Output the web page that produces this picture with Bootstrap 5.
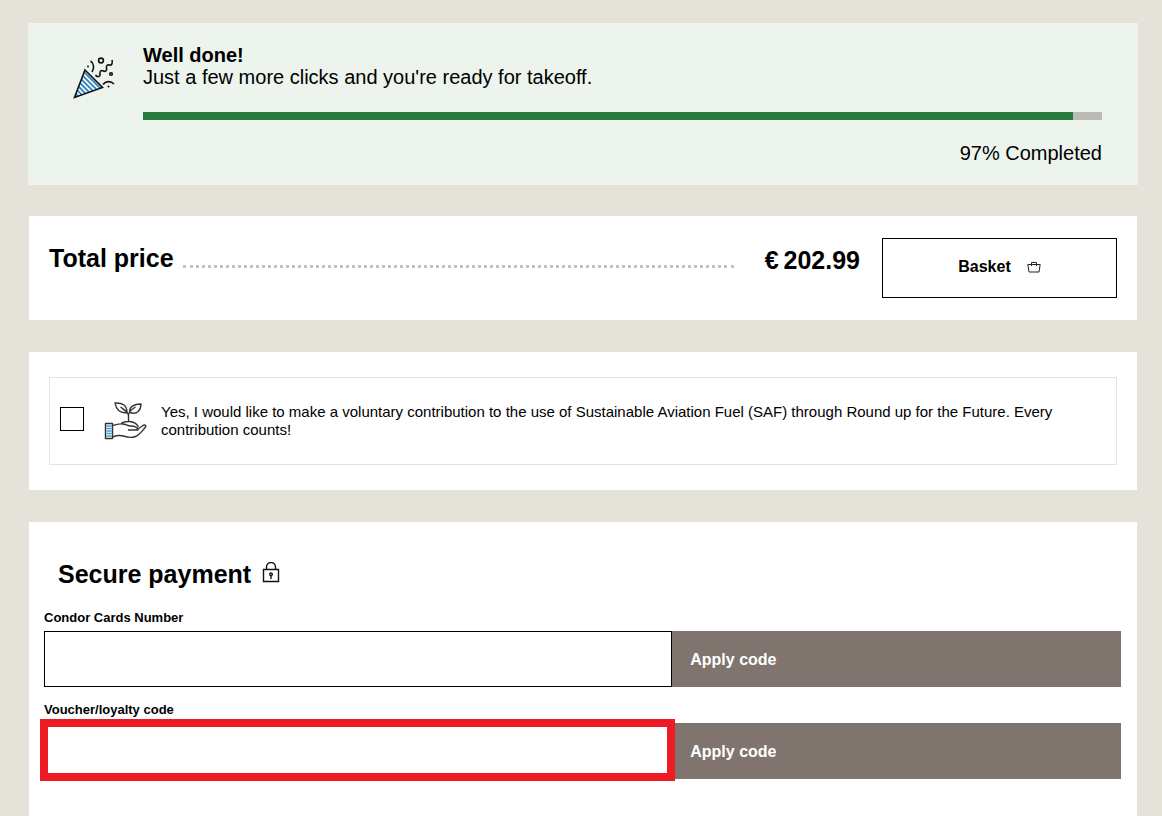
<!DOCTYPE html>
<html lang="en">
<head>
<meta charset="utf-8">
<meta name="viewport" content="width=device-width, initial-scale=1">
<title>Payment</title>
<link href="https://cdn.jsdelivr.net/npm/bootstrap@5.3.0/dist/css/bootstrap.min.css" rel="stylesheet">
<style>
  body { background: #e5e2da; color: #000; font-family: "Liberation Sans", Arial, sans-serif; font-size: 15px; line-height: 18px; }
  .page { min-height: 100vh; padding: 23px 25px 0 29px; }
  .panel { background: #fff; margin-top: 32px; }
  .banner { background: #ecf4ed; margin: 0 -1px -1px; padding: 21px 36px 21px 44px; font-size: 20px; line-height: 22px; }
  .banner-icon { width: 44px; height: 44px; margin: 12px 27px 0 0; }
  .banner .progress { height: 8px; margin: 24px 0 22px; background: #bbbab5; border-radius: 0; }
  .banner .progress-bar { background: #267b3b; }
  .price-panel { padding: 22px 20px; }
  .big { font-size: 25px; line-height: 28px; font-weight: 700; margin: 0; }
  .price-title { margin-top: 6px; }
  .leader { border-bottom: 3px dotted #c4c2be; height: 30px; margin: 0 31px 0 9px; }
  .btn { border-radius: 0; font-size: 16px; line-height: 20px; font-weight: 700; }
  .btn-basket { width: 235px; height: 60px; margin-left: 22px; padding-bottom: 8px; border: 1px solid #000; color: #000; }
  .saf-panel { padding: 25px 20px; }
  .saf-box { border: 1px solid #e3e3e3; padding: 21px 10px; min-height: 88px; }
  .saf-box .form-check-input { width: 24px; height: 24px; margin: 0 0 4px; border: 1px solid #000; border-radius: 0; }
  .saf-icon { width: 44px; height: 44px; margin: 0 13px 0 20px; }
  .pay-panel { padding: 38px 16px 37px 15px; }
  .pay-title { padding-left: 14px; margin-bottom: 22px; }
  .code-label { font-size: 13px; line-height: 16px; font-weight: 700; margin-bottom: 5px; }
  .code-row { height: 56px; margin-bottom: 15px; }
  .code-row .form-control { height: 56px; border: 1px solid #000; border-radius: 0; color: #000; }
  .btn-apply, .btn-apply:hover { background: #7f756e; color: #fff; height: 56px; padding: 2px 18px 0; text-align: left; border: 0; }
  .highlight::after { content: ""; position: absolute; inset: -4px -3px -2px -4px; border: 8px solid #ed1c24; pointer-events: none; z-index: 2; }
</style>
</head>
<body>
<main class="page d-flex flex-column">
  <section class="banner d-flex align-items-start">
    <svg class="banner-icon flex-shrink-0" viewBox="0 0 44 44" fill="none" stroke="#111" stroke-width="1.6" aria-hidden="true">
      <defs>
        <clipPath id="cone"><path d="M13.500 14.500 30 32 3 41.500z"/></clipPath>
      </defs>
      <path clip-path="url(#cone)" stroke="#2b82c4" stroke-width="1.700" d="M-4 20 28 52M-1 18 31 50M2 16 34 48M5 14 37 46M8 12 40 44M11 10 43 42M-7 22 25 54M-10 24 22 56"/>
      <path d="M13 14 30.500 31.500 2.500 41.500z"/>
      <path d="M18.500 5c3.500 2 4 7 1.500 11M31 28.500c2.500-3.500 7.500-4 11-.5M23.500 19c1.500 2.500 5 2 4.500-1s1-4 3.500-3 3.500-.5 3-3 1-3.500 3-3 3.500-1.500 2.500-5"/>
      <circle cx="29" cy="4.500" r="2.400"/><circle cx="39" cy="18" r="1.300"/>
      <g fill="#111" stroke="none"><circle cx="16" cy="10.500" r="1"/><circle cx="36.500" cy="30.500" r="1"/></g>
    </svg>
    <div class="flex-grow-1">
      <div class="fw-bold">Well done!</div>
      <div>Just a few more clicks and you're ready for takeoff.</div>
      <div class="progress" role="progressbar" aria-label="Booking progress" aria-valuenow="97" aria-valuemin="0" aria-valuemax="100">
        <div class="progress-bar" style="width: 97%"></div>
      </div>
      <div class="text-end">97% Completed</div>
    </div>
  </section>

  <section class="panel price-panel d-flex align-items-start">
    <h2 class="big price-title">Total price</h2>
    <div class="leader flex-grow-1"></div>
    <div class="big mt-2">€&thinsp;202.99</div>
    <button type="button" class="btn btn-basket d-flex align-items-center justify-content-center gap-3">Basket
      <svg width="14" height="12" viewBox="0 0 14 12" fill="none" stroke="#222" aria-hidden="true"><path d="M.8 3.500h12.400l-1.200 7.500h-10zM4.500 5V1.500h5V5"/></svg>
    </button>
  </section>

  <section class="panel saf-panel">
    <div class="saf-box d-flex align-items-center">
      <input class="form-check-input flex-shrink-0" type="checkbox" id="saf">
      <svg class="saf-icon flex-shrink-0" viewBox="0 0 44 44" fill="none" stroke="#333" stroke-width="1.400" stroke-linejoin="round" aria-hidden="true">
        <path d="M1.500 24.500h7v15h-7z"/>
        <path stroke="#4a9bd4" stroke-width="1.500" d="M2.300 27h5.400M2.300 29.500h5.400M2.300 32h5.400M2.300 34.500h5.400M2.300 37h5.400"/>
        <path d="M8.500 26.500c4-1 7-2 10-1.500 4 0 5 2 8 2 4 0 7 1 7.500 4h-10M34 30l5-3.500c2-1 3.500 0 2.500 1.500-3 3.500-6 8-10 9.500-5 2-8 1-12-.5-4-1-7-.5-11 1M17 25c3-3.500 14-4 17.500 3M24.500 22.500v-8M24.500 16C23 12 19 10 16.500 8M24.500 16c0-4 4-6 7-8M23 13.500C16 15 12 10 11 4c7-.5 12 2 12 9.500zM26 13.500C24.500 8 30 5 37 5c0 6-4 11-11 8.500z"/>
      </svg>
      <label for="saf">Yes, I would like to make a voluntary contribution to the use of Sustainable Aviation Fuel (SAF) through Round up for the Future. Every contribution counts!</label>
    </div>
  </section>

  <section class="panel pay-panel flex-grow-1">
    <h2 class="big pay-title d-flex align-items-center gap-2">Secure payment
      <svg width="24" height="24" viewBox="0 0 24 24" fill="none" stroke="#111" stroke-width="1.400" aria-hidden="true"><path d="M4.500 7.500h15v12h-15zM7.500 7.500V5a4.500 4.500 0 0 1 9 0v2.500M12 13.500V17"/><circle cx="12" cy="12.300" r="1.300"/></svg>
    </h2>
    <form>
      <label class="code-label d-block" for="card-number">Condor Cards Number</label>
      <div class="code-row row g-0">
        <div class="col-7"><input class="form-control" type="text" id="card-number"></div>
        <div class="col-5"><button type="button" class="btn btn-apply w-100">Apply code</button></div>
      </div>
      <label class="code-label d-block" for="voucher">Voucher/loyalty code</label>
      <div class="code-row row g-0 mb-0">
        <div class="col-7 position-relative highlight"><input class="form-control" type="text" id="voucher"></div>
        <div class="col-5"><button type="button" class="btn btn-apply w-100">Apply code</button></div>
      </div>
    </form>
  </section>
</main>
<script src="https://cdn.jsdelivr.net/npm/bootstrap@5.3.0/dist/js/bootstrap.bundle.min.js"></script>
</body>
</html>
